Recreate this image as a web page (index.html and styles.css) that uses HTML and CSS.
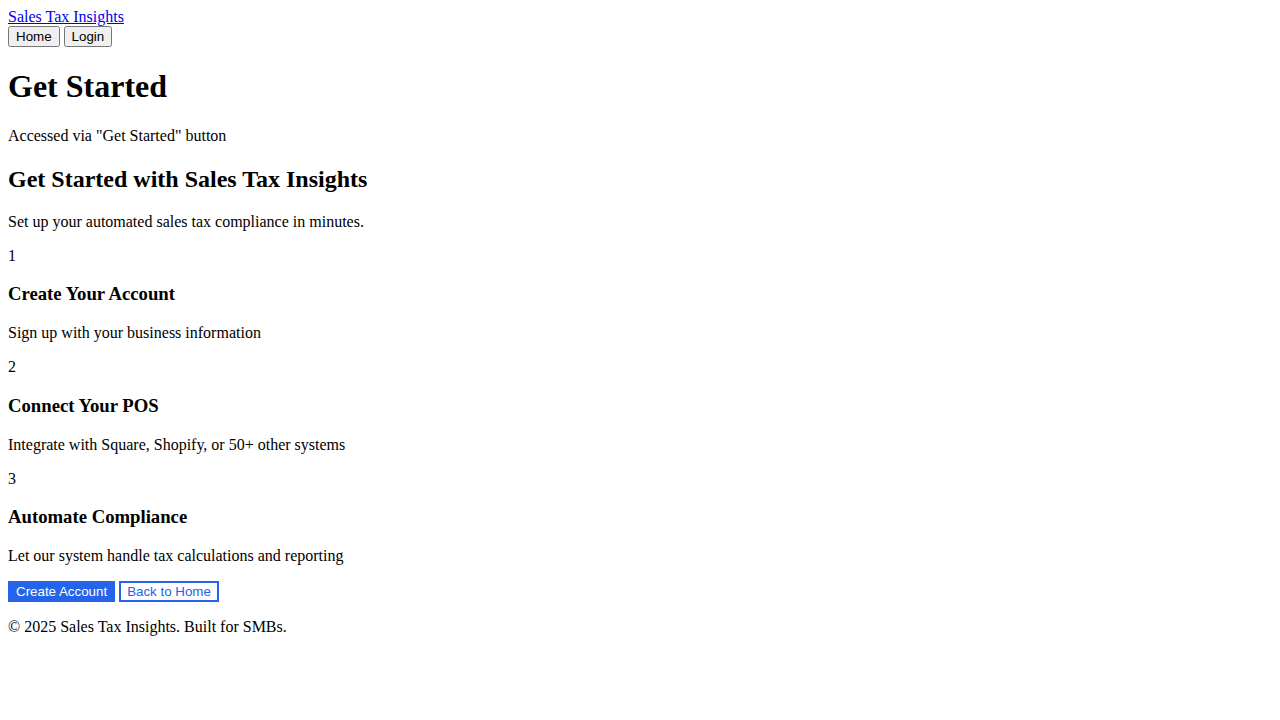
FILE: index.html
```html
<!DOCTYPE html>
<html lang="en">
<head>
<meta charset="utf-8">
<title>Get Started - Sales Tax Insights</title>
<link rel="stylesheet" href="styles.css">
</head>
<body class="page">
<header class="site-header">
  <a class="brand" href="#">Sales Tax Insights</a>
  <nav class="site-nav"><button class="nav-btn">Home</button> <button class="nav-btn">Login</button></nav>
</header>
<main class="content">
  <h1 class="page-title">Get Started</h1>
  <p class="text">Accessed via "Get Started" button</p>
  <section class="onboarding">
    <h2 class="section-title">Get Started with Sales Tax Insights</h2>
    <p class="text">Set up your automated sales tax compliance in minutes.</p>
    <div class="step">
      <div class="step-num">1</div>
      <h3 class="step-title">Create Your Account</h3>
      <p class="text">Sign up with your business information</p>
    </div>
    <div class="step">
      <div class="step-num">2</div>
      <h3 class="step-title">Connect Your POS</h3>
      <p class="text">Integrate with Square, Shopify, or 50+ other systems</p>
    </div>
    <div class="step">
      <div class="step-num">3</div>
      <h3 class="step-title">Automate Compliance</h3>
      <p class="text">Let our system handle tax calculations and reporting</p>
    </div>
    <div class="actions"><button class="btn btn-primary">Create Account</button> <button class="btn btn-secondary">Back to Home</button></div>
  </section>
</main>
<footer class="site-footer">
  <p class="text">© 2025 Sales Tax Insights. Built for SMBs.</p>
</footer>
</body>
</html>
```
FILE: styles.css
```css
.page {
  margin: 8px;
  font-family: "Liberation Serif", "Times New Roman", serif;
  font-size: 16px;
  color: #000;
  background: #fff;
}
.brand {
  color: #0000ee;
  text-decoration: underline;
}
.site-nav { display: block; }
.nav-btn {
  font-family: "Liberation Sans", Arial, sans-serif;
  font-size: 13.333px;
}
.page-title {
  font-size: 2em;
  margin: 0.67em 0;
  font-weight: bold;
}
.section-title {
  font-size: 1.5em;
  margin: calc(0.83em + 1px) 0 0.83em;
  font-weight: bold;
}
.step-title {
  font-size: 1.17em;
  margin: 1em 0;
  font-weight: bold;
}
.text { margin: 1em 0; }
.btn {
  font-family: "Liberation Sans", Arial, sans-serif;
  font-size: 13.333px;
  padding: 1px 6px;
  border: 2px solid #2563eb;
  border-radius: 0;
  margin: 0;
}
.btn-primary {
  background: #2563eb;
  color: #fff;
}
.btn-secondary {
  background: #fff;
  color: #2563eb;
}
```
